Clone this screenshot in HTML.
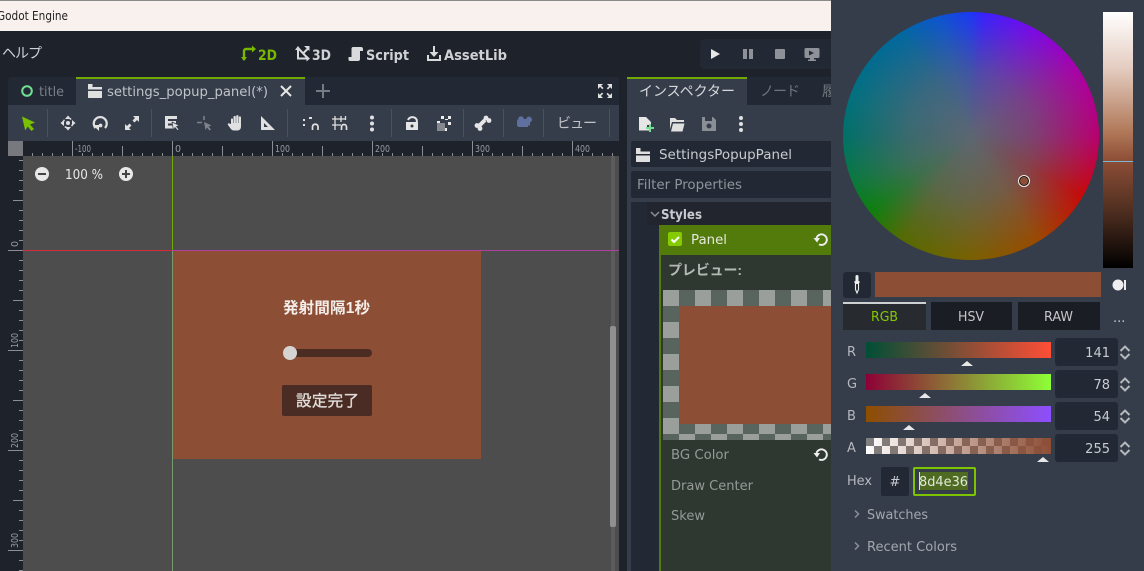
<!DOCTYPE html>
<html><head><meta charset="utf-8"><style>
html,body{margin:0;padding:0;width:1144px;height:571px;overflow:hidden;background:#1d222b}
.b{position:absolute}
svg{position:absolute;left:0;top:0}
text{font-family:"DejaVu Sans","Noto Sans CJK JP",sans-serif;font-size:13px;fill:#d6d8da}
.j{font-family:"Liberation Sans","Noto Sans CJK JP",sans-serif}
</style></head><body>
<div class="b" style="left:0;top:0;width:1144px;height:31px;background:#f9f1ed;border-top:1px solid #8a8a8a;box-sizing:border-box"></div>
<div class="b" style="left:700px;top:39px;width:131px;height:30px;background:#232934;border-radius:4px 0 0 4px"></div>
<!-- tabs -->
<div class="b" style="left:8px;top:77px;width:611px;height:28px;background:#232934;border-radius:3px 3px 0 0"></div>
<div class="b" style="left:76px;top:77px;width:229px;height:28px;background:#363d4a;border-top:2px solid #72a800;box-sizing:border-box"></div>
<div class="b" style="left:8px;top:105px;width:611px;height:36px;background:#363d4a"></div>
<div class="b" style="left:8px;top:141px;width:15px;height:15px;background:#77797e"></div>
<div class="b" style="left:23px;top:156px;width:596px;height:415px;background:#4d4d4d"></div>
<div class="b" style="left:173px;top:251px;width:308px;height:208px;background:#8d4e36"></div>
<div class="b" style="left:283px;top:349px;width:89px;height:8px;background:#4a2c22;border-radius:4px"></div>
<div class="b" style="left:283px;top:346px;width:14px;height:14px;background:#d6d4d2;border-radius:50%"></div>
<div class="b" style="left:282px;top:385px;width:90px;height:31px;background:#4a2c24;border-radius:2px"></div>
<div class="b" style="left:611px;top:156px;width:4px;height:415px;background:#5b5b5b"></div>
<div class="b" style="left:610px;top:326px;width:6px;height:201px;background:#909090;border-radius:2px"></div>
<!-- inspector -->
<div class="b" style="left:627px;top:77px;width:204px;height:28px;background:#232934"></div>
<div class="b" style="left:627px;top:77px;width:120px;height:28px;background:#363d4a;border-top:2px solid #72a800;box-sizing:border-box"></div>
<div class="b" style="left:627px;top:105px;width:204px;height:466px;background:#363d4a"></div>
<div class="b" style="left:631px;top:141px;width:200px;height:26px;background:#232934;border-radius:2px 0 0 2px"></div>
<div class="b" style="left:631px;top:171px;width:200px;height:27px;background:#232934;border-radius:2px 0 0 2px"></div>
<div class="b" style="left:631px;top:202px;width:200px;height:369px;background:#232934"></div>
<div class="b" style="left:647px;top:202px;width:184px;height:23px;background:#22252e"></div>
<div class="b" style="left:659px;top:225px;width:172px;height:346px;background:#2e3830;border-left:2px solid #527b0b;box-sizing:border-box"></div>
<div class="b" style="left:659px;top:225px;width:172px;height:30px;background:#527b0b"></div>
<div class="b" style="left:663px;top:290px;width:168px;height:150px;background:conic-gradient(#5a645e 25%,#9a9f9b 0 50%,#5a645e 0 75%,#9a9f9b 0) 0 0/32px 32px"></div>
<div class="b" style="left:679px;top:306px;width:152px;height:118px;background:#8d4e36"></div>
<svg width="1144" height="571" viewBox="0 0 1144 571">
<defs>
<pattern id="hr" patternUnits="userSpaceOnUse" x="72" y="141" width="100" height="15">
<path d="M.5 0V15M10.5 12V15M20.5 12V15M30.5 12V15M40.5 12V15M50.5 5V15M60.5 12V15M70.5 12V15M80.5 12V15M90.5 12V15" stroke="#8b8e92" fill="none"/>
</pattern>
<pattern id="vr" patternUnits="userSpaceOnUse" x="8" y="250" width="15" height="100">
<path d="M0 .5H15M11 10.5H15M11 20.5H15M11 30.5H15M11 40.5H15M5 50.5H15M11 60.5H15M11 70.5H15M11 80.5H15M11 90.5H15" stroke="#8b8e92" fill="none"/>
</pattern>
</defs>
<rect x="23" y="141" width="596" height="15" fill="url(#hr)"/>
<rect x="8" y="156" width="15" height="415" fill="url(#vr)"/>
<g>
<text x="75" y="152" textLength="16" lengthAdjust="spacingAndGlyphs" style="font-size:9.5px;fill:#9a9da1">-100</text>
<text x="175" y="152" style="font-size:9.5px;fill:#9a9da1">0</text>
<text x="275" y="152" textLength="15" lengthAdjust="spacingAndGlyphs" style="font-size:9.5px;fill:#9a9da1">100</text>
<text x="375" y="152" textLength="15" lengthAdjust="spacingAndGlyphs" style="font-size:9.5px;fill:#9a9da1">200</text>
<text x="475" y="152" textLength="15" lengthAdjust="spacingAndGlyphs" style="font-size:9.5px;fill:#9a9da1">300</text>
<text x="575" y="152" textLength="15" lengthAdjust="spacingAndGlyphs" style="font-size:9.5px;fill:#9a9da1">400</text>
<text transform="translate(18,247) rotate(-90)" style="font-size:9.5px;fill:#9a9da1">0</text>
<text transform="translate(18,348) rotate(-90)" textLength="15" lengthAdjust="spacingAndGlyphs" style="font-size:9.5px;fill:#9a9da1">100</text>
<text transform="translate(18,448) rotate(-90)" textLength="15" lengthAdjust="spacingAndGlyphs" style="font-size:9.5px;fill:#9a9da1">200</text>
<text transform="translate(18,548) rotate(-90)" textLength="15" lengthAdjust="spacingAndGlyphs" style="font-size:9.5px;fill:#9a9da1">300</text>
</g>
<!-- guides -->
<rect x="172" y="156" width="1" height="94" fill="#70a800"/>
<rect x="172" y="251" width="1" height="320" fill="#769a6c"/>
<rect x="23" y="250" width="149" height="1" fill="#d8283c"/>
<rect x="172" y="250" width="447" height="1" fill="#b040a0"/>
<!-- title / menu -->
<text x="-3" y="20" style="font-size:12px;fill:#222" textLength="71" lengthAdjust="spacingAndGlyphs">Godot Engine</text>
<text x="2" y="58" class="j" style="font-size:14px;fill:#cfd1d4" textLength="40">ヘルプ</text>
<!-- main modes -->
<path d="M252 49h-6a2 2 0 0 0-2 2v7M244 60v-1" stroke="#78b800" stroke-width="2.400" fill="none"/>
<path d="M252 45.500l4 3.500-4 3.500zM241 57h6l-3 4z" fill="#78b800"/>
<text x="258" y="60" style="font-size:14px;font-weight:700;fill:#78b800" textLength="19" lengthAdjust="spacingAndGlyphs">2D</text>
<path d="M298 48v10.500h10.500M298 48l9.500 10M308.500 48l-5 5" stroke="#d8dadc" stroke-width="2" fill="none"/>
<path d="M295 50l3-4 3 4zM306.500 55.500l3.500 3-3.500 3zM304 46h5.500v5z" fill="#d8dadc"/>
<text x="312" y="60" style="font-size:14px;font-weight:700;fill:#cfd1d4" textLength="19" lengthAdjust="spacingAndGlyphs">3D</text>
<path d="M353 47h8c1.500 0 2 1 2 2v2h-3v8c0 1.500-1 2-2 2h-8c-1 0-1.500-.5-1.500-1.500V57h3V49c0-1 .5-2 1.500-2z" fill="#d8dadc"/>
<text x="366" y="60" style="font-size:14px;font-weight:700;fill:#cfd1d4" textLength="43" lengthAdjust="spacingAndGlyphs">Script</text>
<path d="M433 46h2v6h3.500l-4.500 5-4.500-5H433zM427 55h2v4h10v-4h2v6h-14z" fill="#d8dadc"/>
<text x="444" y="60" style="font-size:14px;font-weight:700;fill:#cfd1d4" textLength="63" lengthAdjust="spacingAndGlyphs">AssetLib</text>
<!-- run -->
<path d="M711 49l9 5-9 5z" fill="#e6e6e6"/>
<path d="M743 49h4v10h-4zM749 49h4v10h-4z" fill="#8e9298"/>
<rect x="775" y="49" width="10" height="10" rx="1" fill="#8e9298"/>
<path d="M806 48h12a1.500 1.500 0 0 1 1.500 1.500v7a1.500 1.500 0 0 1-1.500 1.500h-4v1.500h2v1.500h-8v-1.500h2V58h-4a1.500 1.500 0 0 1-1.500-1.500v-7A1.500 1.500 0 0 1 806 48zm3 2.500v5l5-2.500z" fill="#8e9298" fill-rule="evenodd"/>
<!-- tabs -->
<circle cx="27" cy="91" r="4.800" fill="none" stroke="#70e090" stroke-width="2"/>
<text x="39" y="96" style="fill:#7a808a" textLength="25" lengthAdjust="spacingAndGlyphs">title</text>
<path d="M88 84h4.500v3H102v2.500H88zM88 91h14v6.500a.5.500 0 0 1-.5.500h-13a.5.500 0 0 1-.5-.5z" fill="#e0e0e0"/>
<text x="107" y="96" style="fill:#c0c3c8" textLength="161" lengthAdjust="spacingAndGlyphs">settings_popup_panel(*)</text>
<path d="M281 86l10 10M291 86l-10 10" stroke="#e6e6e6" stroke-width="2"/>
<path d="M323 84v14M316 91h14" stroke="#767b83" stroke-width="2"/>
<path d="M598 84h5l-1.800 1.800 2.300 2.200-1.200 1.200-2.200-2.300L598 89zM612 84v5l-1.800-1.800-2.200 2.300-1.200-1.200 2.300-2.200L607 84zM598 98v-5l1.800 1.800 2.200-2.300 1.200 1.200-2.300 2.200L603 98zM612 98h-5l1.800-1.800-2.300-2.200 1.200-1.200 2.200 2.300L612 93z" fill="#e0e0e0"/>
<!-- toolbar seps -->
<path d="M47.500 109v28M151.500 109v28M287.500 109v28M391.500 109v28M463.500 109v28M503.500 109v28M543.500 109v28M609.500 109v28" stroke="#4a515d"/>
<!-- toolbar icons -->
<path d="M22 116.500l13 6-5 2 4 4.500-2.500 2-3.800-4.500-2.500 4z" fill="#78c000"/>
<g fill="#e0e0e0"><path d="M68 115.500l3 3.500h-6zM68 130.500l3-3.500h-6zM60.500 123l3.500-3v6zM75.500 123l-3.500-3v6z"/><circle cx="68" cy="123" r="2"/><circle cx="68" cy="123" r="4.800" fill="none" stroke="#e0e0e0" stroke-width="1.400" stroke-dasharray="3.500 4"/></g>
<path d="M95.500 128a6.500 6.500 0 1 1 9.500 0" stroke="#e0e0e0" stroke-width="2.200" fill="none"/><path d="M93 125h6v6z" fill="#e0e0e0"/><circle cx="100.500" cy="125.500" r="1.900" fill="#e0e0e0"/>
<path d="M133 116h6v6l-2-2-2.500 2.500-2-2L135 118zM131 130h-6v-6l2 2 2.500-2.500 2 2L129 128z" fill="#e0e0e0"/><circle cx="132" cy="123" r="1.500" fill="#e0e0e0" opacity="0"/>
<path d="M165 116h12v3h-9v2h8v2.500h-8v2h6v3h-9z" fill="#e0e0e0"/><path d="M172 122l7.500 3.500-3 1 2.500 3-1.500 1-2.500-3-1.500 2.500z" fill="#e0e0e0" stroke="#363d4a" stroke-width=".7"/>
<path d="M197 122.500h5M204 116v4" stroke="#7c8087" stroke-width="1.600" fill="none"/><path d="M204 122l7.500 3.500-3 1 2.500 3-1.500 1-2.500-3-1.500 2.500z" fill="#80848a"/>
<path d="M231 124v-4.500c0-1.500 2-1.500 2 0V123h.5v-6c0-1.500 2.300-1.500 2.300 0v6h.4v-6.800c0-1.500 2.300-1.500 2.300 0v6.800h.4v-5.500c0-1.500 2.100-1.500 2.100 0v9c0 2.500-1.500 4-4 4H234c-1.500 0-2.500-.8-3.500-2l-2.500-3.500c-.8-1.300.8-2.300 1.800-1.300z" fill="#e0e0e0"/>
<path d="M261 116v14h14zM264 123v4h4z" fill="#e0e0e0" fill-rule="evenodd"/>
<path d="M312.500 130v-3.500a2.800 2.800 0 0 1 5.500 0v3.500" stroke="#e0e0e0" stroke-width="1.700" fill="none"/><path d="M303 119h2v2h-2zM303 124h2v2h-2zM309 117h3v2h-3z" fill="#e0e0e0"/>
<path d="M332 119h13M332 125h9M335 116v14M341 116v6M345.500 116v4" stroke="#e0e0e0" stroke-width="1.300" fill="none"/><path d="M341.500 130v-3a2.500 2.500 0 0 1 5 0v3" stroke="#e0e0e0" stroke-width="1.700" fill="none"/>
<g fill="#e0e0e0"><circle cx="372" cy="117.500" r="2"/><circle cx="372" cy="123.500" r="2"/><circle cx="372" cy="129.500" r="2"/></g>
<path d="M406 122h12v7.500a.5.500 0 0 1-.5.500h-11a.5.500 0 0 1-.5-.5zm6 2.500a1.500 1.500 0 1 0 0 3 1.500 1.500 0 0 0 0-3z" fill="#e6e6e6" fill-rule="evenodd"/><path d="M408 120a4.800 4.800 0 0 1 8.800 0v2" stroke="#e6e6e6" stroke-width="2" fill="none"/>
<rect x="437" y="123" width="8" height="8" fill="#85888e"/>
<path d="M441 116h3v3h-3zM448 116h3v3h-3zM448 122h3v3h-3zM445 119h3v1h-3zM437 121h3v2h-3zM445 128h2v3h-2z" fill="#ececec"/>
<path d="M479 126l6-6" stroke="#e6e6e6" stroke-width="4"/><circle cx="486" cy="118" r="2.400" fill="#e6e6e6"/><circle cx="489" cy="120.500" r="2.400" fill="#e6e6e6"/><circle cx="477" cy="125.500" r="2.400" fill="#e6e6e6"/><circle cx="480" cy="128.500" r="2.400" fill="#e6e6e6"/>
<path d="M519 119h7v.5a3 3 0 1 1 2 3V127h-9c-1 0-2-1-2-2v-3c0-2 1-3 2-3z" fill="#5f6f9e"/><path d="M528 122l2-1v5l-2-1z" fill="#5f6f9e"/><circle cx="521" cy="119" r="2.800" fill="#5f6f9e"/>
<text x="557" y="128" class="j" style="font-size:14px;fill:#c0c3c8" textLength="40">ビュー</text>
<!-- inspector text -->
<text x="639" y="96" class="j" style="font-size:14px;fill:#d6d8da" textLength="96">インスペクター</text>
<text x="760" y="96" class="j" style="font-size:14px;fill:#70757d" textLength="40">ノード</text>
<clipPath id="c1"><rect x="800" y="77" width="31" height="30"/></clipPath>
<text x="822" y="96" class="j" clip-path="url(#c1)" style="font-size:14px;fill:#70757d">履歴</text>
<path d="M639 117h7l5 5v3h-4v4h3v1.500h-11z" fill="#e6e6e6"/><path d="M649 124h2v3h3v2h-3v3h-2v-3h-3v-2h3z" fill="#70e090"/>
<path d="M670 118h5l2 2h7v2h-12l-2 7zM673 123.500h11.500l-2 8H671z" fill="#e0e0e0"/>
<path d="M702 117h11l3 3v11h-14zM705 117v4h7v-4zM709 123.500a2.500 2.500 0 1 0 0 5 2.500 2.500 0 0 0 0-5z" fill="#8a8e95" fill-rule="evenodd"/>
<g fill="#e0e0e0"><circle cx="741" cy="118" r="2"/><circle cx="741" cy="124" r="2"/><circle cx="741" cy="130" r="2"/></g>
<path d="M636 148h4.500v3.500H650v2.500h-14zM636 155.500h14v6a.5.500 0 0 1-.5.500h-13a.5.500 0 0 1-.5-.5z" fill="#e0e0e0"/>
<text x="659" y="159" style="fill:#c8cbcf" textLength="133" lengthAdjust="spacingAndGlyphs">SettingsPopupPanel</text>
<text x="637" y="189" style="fill:#8f949b" textLength="105" lengthAdjust="spacingAndGlyphs">Filter Properties</text>
<path d="M651 212l4 4 4-4" stroke="#8a8e95" stroke-width="1.500" fill="none"/>
<text x="661" y="219" style="font-weight:700;fill:#c8cbcf" textLength="41" lengthAdjust="spacingAndGlyphs">Styles</text>
<rect x="668" y="232" width="14" height="14" rx="2" fill="#84cc00"/><path d="M671.500 239.500l2.500 2.500 5-5" stroke="#fff" stroke-width="2" fill="none"/>
<text x="691" y="244" style="fill:#e4e8dc" textLength="36" lengthAdjust="spacingAndGlyphs">Panel</text>
<path d="M816.500 238A5.300 5.300 0 1 1 819 244.300" stroke="#eee" stroke-width="1.900" fill="none"/><path d="M813.500 238h6.500l-3 4.500z" fill="#eee"/>
<g transform="translate(0,215)"><path d="M816.500 238A5.300 5.300 0 1 1 819 244.300" stroke="#eee" stroke-width="1.900" fill="none"/><path d="M813.500 238h6.500l-3 4.500z" fill="#eee"/></g>
<text x="668" y="275" class="j" style="font-size:14px;font-weight:700;fill:#b5b9b5" textLength="74">プレビュー:</text>
<text x="671" y="459" style="fill:#959a96" textLength="58" lengthAdjust="spacingAndGlyphs">BG Color</text>
<text x="671" y="490" style="fill:#959a96" textLength="82" lengthAdjust="spacingAndGlyphs">Draw Center</text>
<text x="671" y="520" style="fill:#959a96" textLength="34" lengthAdjust="spacingAndGlyphs">Skew</text>
<!-- zoom -->
<circle cx="42" cy="174" r="7" fill="#e8e8e8"/><path d="M38 174h8" stroke="#444" stroke-width="2"/>
<text x="65" y="179" style="fill:#e8e8e8" textLength="38" lengthAdjust="spacingAndGlyphs">100 %</text>
<circle cx="126" cy="174" r="7" fill="#e8e8e8"/><path d="M122 174h8M126 170v8" stroke="#444" stroke-width="2"/>
<!-- popup -->
<text x="283" y="313" class="j" style="font-size:15.500px;font-weight:700;fill:#f4eeea" textLength="87">発射間隔1秒</text>
<text x="296" y="406" class="j" style="font-size:15.500px;fill:#e0dcd8;stroke:#e0dcd8;stroke-width:.35px" textLength="63">設定完了</text>
</svg>
<!-- right panel -->
<div class="b" style="left:831px;top:0;width:313px;height:571px;background:#363d4a"></div>
<div class="b" style="left:843px;top:12px;width:256px;height:248px;border-radius:50%;background:radial-gradient(closest-side,#5c6672 0,rgba(92,102,114,.62) 50%,rgba(92,102,114,0) 100%),conic-gradient(from 0deg,#1c37f5 0deg,#3a20ff 6deg,#7a08e8 30deg,#aa00a8 58deg,#b80070 90deg,#c80808 118deg,#9a4a00 148deg,#7a6000 180deg,#556a00 214deg,#0c800c 233deg,#0a7840 250deg,#007068 270deg,#007080 290deg,#0068a0 326deg,#0a55d0 345deg,#1c37f5 360deg)"></div>
<div class="b" style="left:1103px;top:12px;width:30px;height:256px;background:linear-gradient(#fff 0,#e4ccc0 22%,#b07858 47%,#8d4e36 58%,#4e2e20 78%,#000 100%)"></div>
<div class="b" style="left:1103px;top:161px;width:30px;height:1px;background:#7ab8d8"></div>
<div class="b" style="left:1018px;top:175px;width:12px;height:12px;border-radius:50%;background:#8d4e36;border:1px solid #f0f0f0;box-sizing:border-box;box-shadow:inset 0 0 0 1px #111"></div>
<div class="b" style="left:843px;top:272px;width:28px;height:26px;background:#232934;border-radius:3px"></div>
<div class="b" style="left:875px;top:272px;width:226px;height:25px;background:#8d4e36"></div>
<div class="b" style="left:843px;top:302px;width:83px;height:28px;background:#272b30;border-top:2px solid #cfd0d2;box-sizing:border-box"></div>
<div class="b" style="left:931px;top:302px;width:81px;height:28px;background:#1b1d24"></div>
<div class="b" style="left:1018px;top:302px;width:82px;height:28px;background:#1b1d24"></div>
<div class="b" style="left:866px;top:342px;width:185px;height:16px;background:linear-gradient(90deg,#004e36,#ff4e36)"></div>
<div class="b" style="left:866px;top:374px;width:185px;height:16px;background:linear-gradient(90deg,#8d0036,#8dff36)"></div>
<div class="b" style="left:866px;top:406px;width:185px;height:16px;background:linear-gradient(90deg,#8d4e00,#8d4eff)"></div>
<div class="b" style="left:866px;top:438px;width:185px;height:16px;background:linear-gradient(90deg,rgba(141,78,54,0),#8d4e36),conic-gradient(#fff 25%,#808080 0 50%,#fff 0 75%,#808080 0) 0 0/16px 16px"></div>
<div class="b" style="left:1055px;top:338px;width:63px;height:28px;background:#232934;border-radius:3px"></div>
<div class="b" style="left:1055px;top:370px;width:63px;height:28px;background:#232934;border-radius:3px"></div>
<div class="b" style="left:1055px;top:402px;width:63px;height:28px;background:#232934;border-radius:3px"></div>
<div class="b" style="left:1055px;top:434px;width:63px;height:28px;background:#232934;border-radius:3px"></div>
<div class="b" style="left:881px;top:467px;width:28px;height:29px;background:#232934;border-radius:2px"></div>
<div class="b" style="left:913px;top:467px;width:63px;height:29px;border:2px solid #7fc400;border-radius:2px;box-sizing:border-box"></div>
<div class="b" style="left:919px;top:472px;width:49px;height:18px;background:#4f6b22"></div>
<div class="b" style="left:919px;top:472px;width:1px;height:18px;background:#e0e0e0"></div>
<svg width="1144" height="571" viewBox="0 0 1144 571">
<path d="M855.500 276.500a1.500 1.500 0 0 1 3 0V281h1v2h-5v-2h1z" fill="#eee"/>
<path d="M855.500 283.500h3v6l-1.500 3.500-1.500-3.500z" fill="#232934" stroke="#eee" stroke-width="1.100"/>
<circle cx="1118" cy="285" r="5.500" fill="#eee"/><rect x="1124" y="280" width="2" height="10" fill="#eee"/>
<text x="871" y="321" style="fill:#86c800" textLength="27" lengthAdjust="spacingAndGlyphs">RGB</text>
<text x="958" y="321" style="fill:#c4c6c9" textLength="26" lengthAdjust="spacingAndGlyphs">HSV</text>
<text x="1044" y="321" style="fill:#c4c6c9" textLength="29" lengthAdjust="spacingAndGlyphs">RAW</text>
<text x="1113" y="322" style="fill:#c4c6c9">...</text>
<text x="847" y="356" style="fill:#b5b8bd">R</text>
<text x="847" y="388" style="fill:#b5b8bd">G</text>
<text x="847" y="420" style="fill:#b5b8bd">B</text>
<text x="847" y="452" style="fill:#b5b8bd">A</text>
<text x="847" y="485" style="fill:#b5b8bd" textLength="25" lengthAdjust="spacingAndGlyphs">Hex</text>
<path d="M961 366l6-5 6 5zM919 398l6-5 6 5zM903 430l6-5 6 5zM1037 462l6-5 6 5z" fill="#e8e8e8"/>
<text x="1110" y="357" text-anchor="end" style="fill:#c8cbcf">141</text>
<text x="1110" y="389" text-anchor="end" style="fill:#c8cbcf">78</text>
<text x="1110" y="421" text-anchor="end" style="fill:#c8cbcf">54</text>
<text x="1110" y="453" text-anchor="end" style="fill:#c8cbcf">255</text>
<g stroke="#b5b8bd" stroke-width="2" fill="none">
<path d="M1120.500 351l4.500-4.500 4.500 4.500M1120.500 354l4.500 4.500 4.500-4.500M1120.500 383l4.500-4.500 4.500 4.500M1120.500 386l4.500 4.500 4.500-4.500M1120.500 415l4.500-4.500 4.500 4.500M1120.500 418l4.500 4.500 4.500-4.500M1120.500 447l4.500-4.500 4.500 4.500M1120.500 450l4.500 4.500 4.500-4.500"/>
</g>
<text x="895" y="486" text-anchor="middle" style="fill:#c8cbcf">#</text>
<text x="919" y="486" style="fill:#e0e8d8" textLength="49" lengthAdjust="spacingAndGlyphs">8d4e36</text>
<path d="M855 510.500l3.500 3.500-3.500 3.500M855 542.500l3.500 3.500-3.500 3.500" stroke="#8a8e95" stroke-width="1.500" fill="none"/>
<text x="867" y="519" style="fill:#a3a7ad" textLength="61" lengthAdjust="spacingAndGlyphs">Swatches</text>
<text x="867" y="551" style="fill:#a3a7ad" textLength="90" lengthAdjust="spacingAndGlyphs">Recent Colors</text>
</svg>
</body></html>
